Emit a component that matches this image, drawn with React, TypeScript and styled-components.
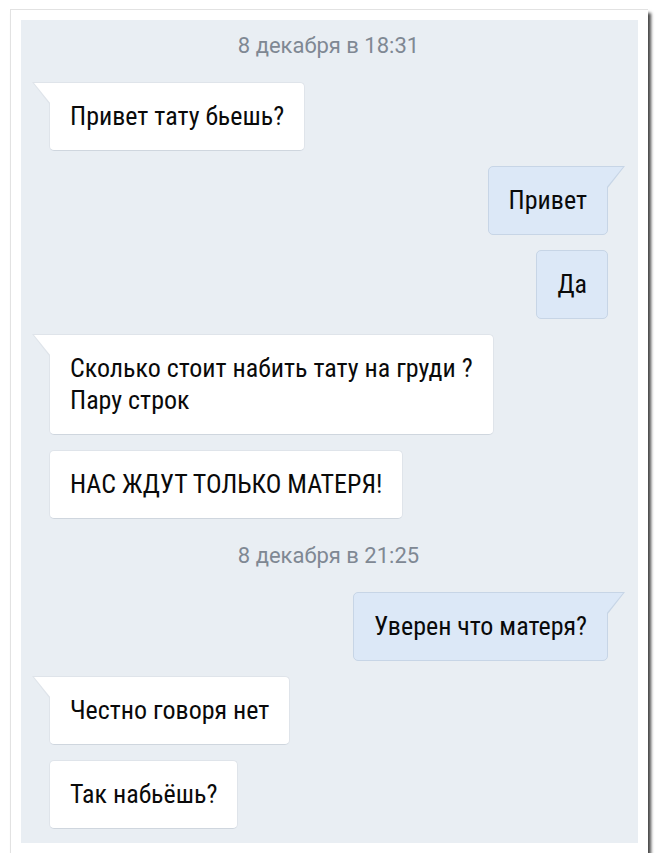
import React from "react";
import styled, { createGlobalStyle, css } from "styled-components";

const GlobalStyle = createGlobalStyle`
  html, body {
    margin: 0;
    padding: 0;
    background: #ffffff;
  }
`;

const Frame = styled.div`
  box-sizing: border-box;
  margin: 9px 0 0 10px;
  width: 638px;
  height: 844px;
  padding: 10px;
  background: #ffffff;
  border-top: 1px solid #e2e2e2;
  border-left: 1px solid #e2e2e2;
  box-shadow: 3px 4px 3px rgba(0, 0, 0, 0.72);
`;

const Chat = styled.div`
  box-sizing: border-box;
  height: 100%;
  display: flex;
  flex-direction: column;
  gap: 15px;
  padding: 4px 30px 0 28px;
  background: #e9eef3;
`;

const DateLabel = styled.div`
  align-self: center;
  height: 43px;
  line-height: 43px;
  font-family: Roboto, "Noto Sans", sans-serif;
  font-size: 22px;
  color: #7f8893;
`;

type BubbleProps = { $out?: boolean; $tail?: boolean };

const Bubble = styled.div<BubbleProps>`
  position: relative;
  box-sizing: border-box;
  align-self: ${(p) => (p.$out ? "flex-end" : "flex-start")};
  padding: 17px 20px 18px;
  font-family: "Roboto Condensed", "Liberation Sans Narrow", "DejaVu Sans Condensed", Roboto, sans-serif;
  font-size: 26px;
  line-height: 32px;
  color: #0a0a0a;
  border-radius: 5px;
  background: ${(p) => (p.$out ? "#dce8f7" : "#ffffff")};
  ${(p) =>
    p.$out
      ? css`
          border: 1px solid #c7d5e6;
        `
      : css`
          border: 1px solid #dfe4ea;
          border-bottom-color: #cfd6de;
        `}

  ${(p) =>
    p.$tail &&
    (p.$out
      ? css`
          border-top-right-radius: 0;
          &::before {
            content: "";
            position: absolute;
            top: -1px;
            right: -18px;
            width: 18px;
            height: 23px;
            background: #c7d5e6;
            clip-path: polygon(0 0, 100% 0, 0 100%);
          }
          &::after {
            content: "";
            position: absolute;
            top: 0;
            right: -16px;
            width: 17px;
            height: 21px;
            background: #dce8f7;
            clip-path: polygon(0 0, 100% 0, 0 100%);
          }
        `
      : css`
          border-top-left-radius: 0;
          &::before {
            content: "";
            position: absolute;
            top: -1px;
            left: -18px;
            width: 18px;
            height: 23px;
            background: #dfe4ea;
            clip-path: polygon(0 0, 100% 0, 100% 100%);
          }
          &::after {
            content: "";
            position: absolute;
            top: 0;
            left: -16px;
            width: 17px;
            height: 21px;
            background: #ffffff;
            clip-path: polygon(0 0, 100% 0, 100% 100%);
          }
        `)}
`;

type Item =
  | { kind: "date"; text: string }
  | { kind: "msg"; out?: boolean; tail?: boolean; lines: string[] };

const items: Item[] = [
  { kind: "date", text: "8 декабря в 18:31" },
  { kind: "msg", tail: true, lines: ["Привет тату бьешь?"] },
  { kind: "msg", out: true, tail: true, lines: ["Привет"] },
  { kind: "msg", out: true, lines: ["Да"] },
  { kind: "msg", tail: true, lines: ["Сколько стоит набить тату на груди ?", "Пару строк"] },
  { kind: "msg", lines: ["НАС ЖДУТ ТОЛЬКО МАТЕРЯ!"] },
  { kind: "date", text: "8 декабря в 21:25" },
  { kind: "msg", out: true, tail: true, lines: ["Уверен что матеря?"] },
  { kind: "msg", tail: true, lines: ["Честно говоря нет"] },
  { kind: "msg", lines: ["Так набьёшь?"] },
];

export default function App() {
  return (
    <>
      <GlobalStyle />
      <Frame>
        <Chat>
          {items.map((item, i) =>
            item.kind === "date" ? (
              <DateLabel key={i}>{item.text}</DateLabel>
            ) : (
              <Bubble key={i} $out={item.out} $tail={item.tail}>
                {item.lines.map((line, j) => (
                  <div key={j}>{line}</div>
                ))}
              </Bubble>
            )
          )}
        </Chat>
      </Frame>
    </>
  );
}
